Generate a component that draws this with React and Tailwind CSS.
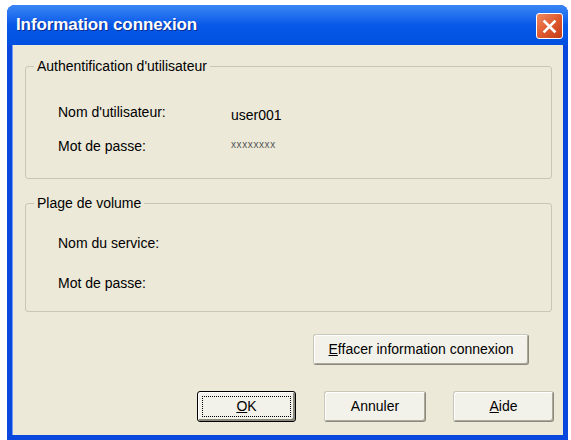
import React from 'react';

const font = { fontFamily: '"Liberation Sans", Arial, sans-serif' };

const XpButton = ({ children, className = '', isDefault = false }) => (
  <button
    type="button"
    className={`h-[31px] rounded-[3px] bg-[#f3f2ea] text-[14px] text-black ${
      isDefault
        ? 'border border-black shadow-[inset_1px_1px_0_#fff,inset_-2px_-2px_0_#8b897c] p-[4px]'
        : 'border border-[#c9c7ba] border-r-[#8b897c] border-b-[#8b897c] shadow-[inset_1px_1px_0_#fff,inset_-1px_-1px_0_#aca899]'
    } ${className}`}
  >
    {isDefault ? (
      <span className="flex h-full w-full items-center justify-center border border-dotted border-black">
        {children}
      </span>
    ) : (
      children
    )}
  </button>
);

const Row = ({ label, value, className = '' }) => (
  <div className={`flex items-start leading-[16px] ${className}`}>
    <span className="w-[205px] pl-[32px] text-[14px] text-black">{label}</span>
    {value}
  </div>
);

export default function App() {
  return (
    <div className="h-[440px] w-[571px] overflow-hidden bg-white pl-[7px] pr-[3px] pt-[5px]" style={font}>
      <div className="flex h-[435px] flex-col overflow-hidden rounded-t-[8px] bg-[#0a47dc]">
        {/* Title bar */}
        <div className="flex h-[40px] shrink-0 items-center justify-between bg-gradient-to-b from-[#3a86f5] via-[#0758e8] to-[#0250df] pl-[9px] pr-[5px]">
          <span className="text-[17px] font-bold tracking-[-0.1px] text-white [text-shadow:1px_1px_0_#0a2a8c]">
            Information connexion
          </span>
          <div className="mt-[2px] flex h-[26px] w-[27px] items-center justify-center rounded-[3px] border border-white bg-gradient-to-br from-[#f08a60] via-[#df5a30] to-[#c23c15]">
            <svg width="15" height="15" viewBox="0 0 15 15">
              <path d="M2.5 2.5 L12.5 12.5 M12.5 2.5 L2.5 12.5" stroke="#fff" strokeWidth="2.6" strokeLinecap="square" />
            </svg>
          </div>
        </div>

        {/* Body */}
        <div className="mx-[5px] mb-[5px] flex flex-1 flex-col bg-[#ece9d8] pt-[13px] shadow-[inset_1px_0_0_#6f9bf2]">
          <fieldset className="ml-[13px] mr-[11px] rounded-[3px] border border-[#c9c6b6] pb-[24px]">
            <legend className="ml-[8px] px-[3px] text-[14px] leading-[16px] text-black">
              Authentification d'utilisateur
            </legend>
            <Row
              className="mt-[30px]"
              label="Nom d'utilisateur:"
              value={<span className="mt-[3px] text-[14px] text-black">user001</span>}
            />
            <Row
              className="mt-[15px]"
              label="Mot de passe:"
              value={<span className="text-[10px] leading-[14px] tracking-[0.6px] text-[#555]">xxxxxxxx</span>}
            />
          </fieldset>

          <fieldset className="ml-[13px] mr-[11px] mt-[16px] rounded-[3px] border border-[#c9c6b6] pb-[20px]">
            <legend className="ml-[8px] px-[3px] text-[14px] leading-[16px] text-black">Plage de volume</legend>
            <Row className="mt-[24px]" label="Nom du service:" />
            <Row className="mt-[24px]" label="Mot de passe:" />
          </fieldset>

          <div className="mr-[34px] mt-[22px] flex justify-end">
            <XpButton className="w-[216px]">
              <span className="underline">E</span>ffacer information connexion
            </XpButton>
          </div>

          <div className="mr-[9px] mt-[26px] flex justify-end gap-[28px]">
            <XpButton isDefault className="w-[99px]">
              <span className="underline">O</span>K
            </XpButton>
            <div className="flex gap-[27px]">
              <XpButton className="w-[102px]">Annuler</XpButton>
              <XpButton className="w-[101px]">
                <span className="underline">A</span>ide
              </XpButton>
            </div>
          </div>
        </div>
      </div>
    </div>
  );
}
